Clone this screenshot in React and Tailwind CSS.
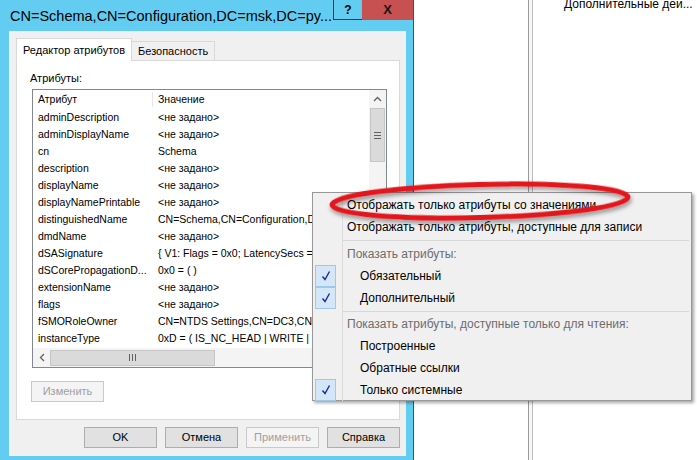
import React from 'react';

const rows = [
  ['adminDescription', '<не задано>'],
  ['adminDisplayName', '<не задано>'],
  ['cn', 'Schema'],
  ['description', '<не задано>'],
  ['displayName', '<не задано>'],
  ['displayNamePrintable', '<не задано>'],
  ['distinguishedName', 'CN=Schema,CN=Configuration,DC=msk,DC=ru'],
  ['dmdName', '<не задано>'],
  ['dSASignature', '{ V1: Flags = 0x0; LatencySecs = 0; DsaGuid = ... }'],
  ['dSCorePropagationD...', '0x0 = ( )'],
  ['extensionName', '<не задано>'],
  ['flags', '<не задано>'],
  ['fSMORoleOwner', 'CN=NTDS Settings,CN=DC3,CN=Servers,CN=Default'],
  ['instanceType', '0xD = ( IS_NC_HEAD | WRITE | NC_ABOVE )'],
];

const CheckBox = () => (
  <div className="flex h-[22px] w-[21px] items-center justify-center border border-[#9ec8ec] bg-[#d3e7f8]">
    <svg width="12" height="12" viewBox="0 0 12 12">
      <path d="M2.5 6.5 L5 9.5 L9.5 1.5" fill="none" stroke="#1b2a9c" strokeWidth="1.4" />
    </svg>
  </div>
);

const MenuItem = ({ children, checked, indent, muted }) => (
  <div className="flex h-[22px]">
    <div className="w-[30px] shrink-0 border-r border-[#dcdcdc] pl-[2px]">
      {checked && <CheckBox />}
    </div>
    <div
      className={`flex items-center whitespace-nowrap ${indent ? 'pl-[17px]' : 'pl-[4px]'} ${
        muted ? 'text-[#6d6d6d]' : 'text-black'
      }`}
    >
      {children}
    </div>
  </div>
);

const MenuSeparator = ({ h }) => (
  <div className={`flex ${h}`}>
    <div className="w-[30px] shrink-0 border-r border-[#dcdcdc]" />
    <div className="flex flex-1 items-center pr-[2px]">
      <div className="h-px w-full bg-[#d7d7d7]" />
    </div>
  </div>
);

const ContextMenu = () => (
  <div className="absolute left-[312px] top-[192px] h-[209px] w-[380px] border border-[#979797] bg-[#f0f0f0] pt-px text-[12px] shadow-[2px_2px_3px_rgba(0,0,0,0.35)]">
    <MenuItem>Отображать только атрибуты со значениями</MenuItem>
    <MenuItem>Отображать только атрибуты, доступные для записи</MenuItem>
    <MenuSeparator h="h-[5px]" />
    <MenuItem muted>Показать атрибуты:</MenuItem>
    <MenuItem checked indent>Обязательный</MenuItem>
    <MenuItem checked indent>Дополнительный</MenuItem>
    <MenuSeparator h="h-[4px]" />
    <MenuItem muted>Показать атрибуты, доступные только для чтения:</MenuItem>
    <MenuItem indent>Построенные</MenuItem>
    <MenuItem indent>Обратные ссылки</MenuItem>
    <MenuItem checked indent>Только системные</MenuItem>
  </div>
);

const AttributeList = () => (
  <div className="ml-[15px] mt-[4px] flex h-[279px] w-[355px] flex-col border border-[#828790] bg-white text-[10.5px]">
    <div className="flex h-[258px]">
      <div className="w-[336px] overflow-hidden">
        <div className="flex h-[19px] items-center">
          <div className="w-[120px] border-r border-[#e5e5e5] pl-[5px]">Атрибут</div>
          <div className="pl-[5px]">Значение</div>
        </div>
        {rows.map(([name, value]) => (
          <div key={name} className="flex h-[17px] items-center whitespace-nowrap">
            <div className="w-[120px] shrink-0 pl-[5px]">{name}</div>
            <div className="pl-[5px]">{value}</div>
          </div>
        ))}
      </div>
      <div className="flex w-[17px] flex-col bg-[#f4f4f4]">
        <div className="flex h-[18px] items-center justify-center">
          <svg width="9" height="6" viewBox="0 0 9 6">
            <path d="M1 5 L4.5 1.5 L8 5" fill="none" stroke="#606060" strokeWidth="1.3" />
          </svg>
        </div>
        <div className="mx-px flex h-[54px] flex-col items-center justify-center gap-[2px] border border-[#c5c5c5] bg-[#dadada]">
          <div className="h-px w-[7px] bg-[#606060]" />
          <div className="h-px w-[7px] bg-[#606060]" />
          <div className="h-px w-[7px] bg-[#606060]" />
        </div>
      </div>
    </div>
    <div className="flex h-[19px] items-center bg-[#f4f4f4]">
      <div className="flex w-[17px] justify-center">
        <svg width="6" height="9" viewBox="0 0 6 9">
          <path d="M5 1 L1.5 4.5 L5 8" fill="none" stroke="#606060" strokeWidth="1.3" />
        </svg>
      </div>
      <div className="flex h-[16px] w-[165px] items-center justify-center gap-[2px] border border-[#c5c5c5] bg-[#dadada]">
        <div className="h-[7px] w-px bg-[#606060]" />
        <div className="h-[7px] w-px bg-[#606060]" />
        <div className="h-[7px] w-px bg-[#606060]" />
      </div>
    </div>
  </div>
);

const Btn = ({ children, disabled }) => (
  <div
    className={`flex h-[21px] w-[73px] items-center justify-center border ${
      disabled ? 'border-[#c9c9c9] bg-[#f4f4f4] text-[#a0a0a0]' : 'border-[#adadad] bg-[#e1e1e1] text-black'
    }`}
  >
    {children}
  </div>
);

const Dialog = () => (
  <div className="flex h-full w-[414px] shrink-0 flex-col border-r border-[#3a5368] bg-[#62cdf1]">
    <div className="flex h-[31px] shrink-0 items-start">
      <div className="flex-1 overflow-hidden whitespace-nowrap pl-[10px] pt-[7px] text-[14.5px] leading-[18px] text-black">
        CN=Schema,CN=Configuration,DC=msk,DC=py...
      </div>
      <div className="flex h-[20px] w-[29px] items-center justify-center border-b border-l border-[#2b3440] text-[12px] font-bold text-black">
        ?
      </div>
      <div className="flex h-[20px] w-[51px] items-center justify-center bg-[#c75050] text-[13px] font-bold text-[#1e1414]">
        X
      </div>
    </div>
    <div className="mb-[4px] ml-[9px] mr-[7px] flex flex-1 flex-col bg-[#f0f0f0] px-[7px] pt-[7px] text-[11px]">
      <div className="flex h-[22px] items-end">
        <div className="z-10 -mb-px flex h-[23px] items-center border border-b-0 border-[#d9d9d9] bg-white px-[6px]">
          Редактор атрибутов
        </div>
        <div className="flex h-[19px] items-center border border-b-0 border-l-0 border-[#d9d9d9] bg-[#f0f0f0] px-[6px]">
          Безопасность
        </div>
      </div>
      <div className="flex h-[360px] w-[384px] flex-col border border-[#d9d9d9] bg-white">
        <div className="ml-[13px] mt-[10px] leading-[14px]">Атрибуты:</div>
        <AttributeList />
        <div className="ml-[14px] mt-[13px]">
          <Btn disabled>Изменить</Btn>
        </div>
      </div>
      <div className="mt-[7px] flex w-[384px] justify-end gap-[8px]">
        <Btn>OK</Btn>
        <Btn>Отмена</Btn>
        <Btn disabled>Применить</Btn>
        <Btn>Справка</Btn>
      </div>
    </div>
  </div>
);

const RightPane = () => (
  <div className="flex h-full flex-1 bg-white">
    <div className="w-[114px]" />
    <div className="h-full w-[5px] border-x border-l-[#9a9a9a] border-r-[#bdbdbd] bg-[#f7f7f7]" />
    <div className="-mt-[3px] whitespace-nowrap pl-[31px] text-[12px] leading-[14px] text-black">
      Дополнительные дей...
    </div>
  </div>
);

export default function App() {
  return (
    <div className="relative flex h-[460px] w-[697px] overflow-hidden bg-white font-['Liberation_Sans',Arial,sans-serif] text-black">
      <Dialog />
      <RightPane />
      <ContextMenu />
      <svg className="pointer-events-none absolute left-0 top-0" width="697" height="460">
        <defs>
          <filter id="sh" x="-10%" y="-50%" width="120%" height="200%">
            <feDropShadow dx="1" dy="3" stdDeviation="2" floodColor="#000" floodOpacity="0.4" />
          </filter>
        </defs>
        <ellipse
          cx="480"
          cy="201"
          rx="148"
          ry="16.5"
          transform="rotate(-1.5 480 201)"
          fill="none"
          stroke="#e3141b"
          strokeWidth="5"
          filter="url(#sh)"
        />
      </svg>
    </div>
  );
}
